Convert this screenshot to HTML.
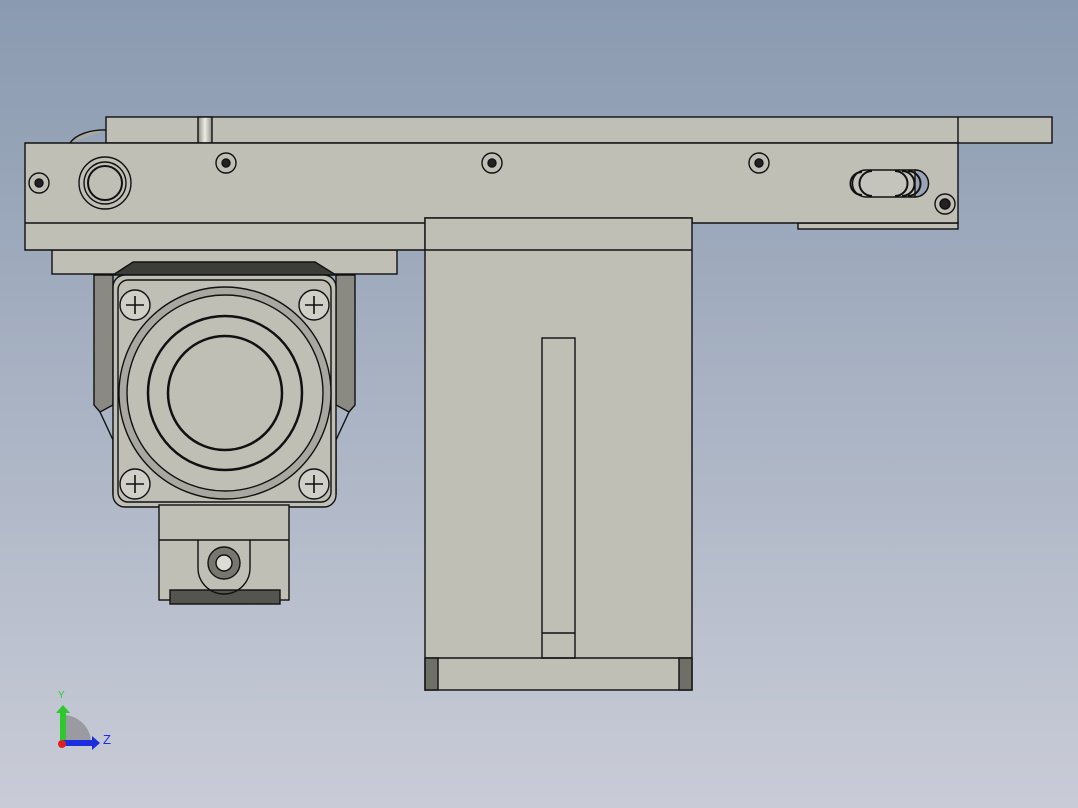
<!DOCTYPE html>
<html><head><style>html,body{margin:0;padding:0;width:1078px;height:808px;overflow:hidden}</style></head>
<body>
<svg width="1078" height="808" viewBox="0 0 1078 808" xmlns="http://www.w3.org/2000/svg" font-family="Liberation Sans, sans-serif">
<defs>
<linearGradient id="bg" x1="0" y1="0" x2="0" y2="1">
<stop offset="0" stop-color="#8a9ab0"/><stop offset="1" stop-color="#c9ccd7"/>
</linearGradient>
<linearGradient id="pin" x1="0" y1="0" x2="1" y2="0">
<stop offset="0" stop-color="#8f8f88"/><stop offset="0.5" stop-color="#ededE6"/><stop offset="1" stop-color="#8f8f88"/>
</linearGradient>
</defs>
<rect width="1078" height="808" fill="url(#bg)"/>
<g stroke="#111" stroke-width="1.4" fill="#bfbfb6">
<path d="M70 143 A36 20 0 0 1 106 130" fill="#a9a9a1"/>
<!-- top bar -->
<rect x="106" y="117" width="946" height="26"/>
<line x1="958" y1="117" x2="958" y2="143"/>
<rect x="198" y="117" width="14" height="26" fill="url(#pin)"/>
<!-- strip under right -->
<rect x="798" y="223" width="160" height="6"/>
<!-- under plate part -->
<rect x="52" y="250" width="345" height="24"/>
<!-- main plate -->
<path d="M25 143 H958 V223 H692 V218 H425 V250 H25 Z"/>
<line x1="25" y1="223" x2="425" y2="223"/>
<!-- big block -->
<rect x="425" y="218" width="267" height="472"/>
<line x1="425" y1="250" x2="692" y2="250"/>
<rect x="542" y="338" width="33" height="320"/>
<line x1="542" y1="633" x2="575" y2="633"/>
<line x1="425" y1="658" x2="692" y2="658"/>
<rect x="425" y="658" width="13" height="32" fill="#6f6f68"/>
<rect x="679" y="658" width="13" height="32" fill="#6f6f68"/>
<!-- motor side brackets -->
<path d="M94 275 H113 V405 L100 412 L94 405 Z" fill="#8a8a82"/>
<path d="M355 275 H336 V405 L349 412 L355 405 Z" fill="#8a8a82"/>
<path d="M100 412 L113 440 V495 M349 412 L336 440 V495" fill="none"/>
<path d="M113 275 L133 262 H315 L336 275 Z" fill="#3c3c38"/>
<!-- motor body -->
<rect x="113" y="275" width="223" height="232" rx="12"/>
<rect x="118" y="280" width="213" height="222" rx="10"/>
<circle cx="225" cy="393" r="106" fill="#a8a8a0"/>
<circle cx="225" cy="393" r="98"/>
<circle cx="225" cy="393" r="77" stroke-width="2.5"/>
<circle cx="225" cy="393" r="57" stroke-width="2.5"/>
<!-- bottom connector -->
<rect x="159" y="505" width="130" height="95"/>
<line x1="159" y1="540" x2="289" y2="540"/>
<rect x="170" y="590" width="110" height="14" fill="#55554f"/>
<path d="M198 540 V568 A26 26 0 0 0 250 568 V540" fill="none"/>
<circle cx="224" cy="563" r="16" fill="#77776f"/>
<circle cx="224" cy="563" r="8" fill="#dcdcd4"/>
<!-- screws -->
<g fill="#d0d0c8">
<circle cx="135" cy="305" r="15"/><circle cx="314" cy="305" r="15"/>
<circle cx="135" cy="484" r="15"/><circle cx="314" cy="484" r="15"/>
</g>
<g stroke-width="1.6">
<path d="M135 296v18M126 305h18M314 296v18M305 305h18M135 475v18M126 484h18M314 475v18M305 484h18"/>
</g>
<!-- holes -->
<g>
<circle cx="39" cy="183" r="10"/><circle cx="39" cy="183" r="4" fill="#222"/>
<circle cx="226" cy="163" r="10"/><circle cx="226" cy="163" r="4" fill="#222"/>
<circle cx="492" cy="163" r="10"/><circle cx="492" cy="163" r="4" fill="#222"/>
<circle cx="759" cy="163" r="10"/><circle cx="759" cy="163" r="4" fill="#222"/>
<circle cx="945" cy="204" r="10"/><circle cx="945" cy="204" r="5" fill="#222"/>
<circle cx="105" cy="183" r="26"/><circle cx="105" cy="183" r="21"/><circle cx="105" cy="183" r="17" stroke-width="2"/>
</g>
<!-- slot -->
<path d="M866 170 H915 A13 13 0 0 1 915 197 H866 A13 13 0 0 1 866 170 Z" fill="#c4c4bc"/>
<path d="M915 170 A13 13 0 0 1 915 197 Z" fill="#9aa4b6"/>
<path d="M862 172 A11 11 0 0 0 862 195 M872 171 A12 12 0 0 0 872 196 M895 171 A12 12 0 0 1 895 196 M902 171 A12 12 0 0 1 902 196 M908 171 A12 12 0 0 1 908 196" fill="none" stroke-width="2"/>
</g>
<!-- axis triad -->
<path d="M63 715 A28 28 0 0 1 91 743 H63 Z" fill="#9a9ba2"/>
<rect x="60" y="711" width="6" height="32" fill="#2ec82e"/>
<path d="M56 713 L63 705 L70 713 Z" fill="#2ec82e"/>
<rect x="63" y="740" width="30" height="6" fill="#1a2ee0"/>
<path d="M92 736 L100 743 L92 750 Z" fill="#1a2ee0"/>
<circle cx="62" cy="744" r="4" fill="#e02020"/>
<text x="58" y="698" font-size="10" fill="#2ec82e">Y</text>
<text x="103" y="744" font-size="13" fill="#1a2ee0">Z</text>
</svg>
</body></html>
